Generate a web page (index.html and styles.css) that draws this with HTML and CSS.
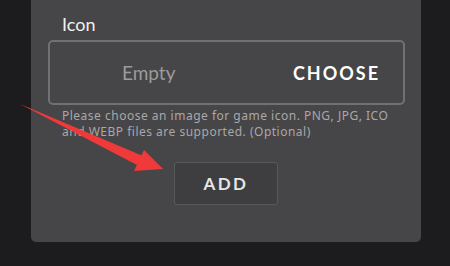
FILE: index.html
```html
<!DOCTYPE html>
<html lang="en">
<head>
    <meta charset="UTF-8">
    <meta name="viewport" content="width=device-width, initial-scale=1.0">
    <title>Add game</title>
    <link rel="stylesheet" href="styles.css">
</head>
<body>
    <div class="panel">
        <div class="form-group">
            <label class="field-label">Icon</label>
            <div class="picker">
                <span class="picker-empty">Empty</span>
                <span class="picker-choose">CHOOSE</span>
            </div>
            <p class="help">Please choose an image for game icon. PNG, JPG, ICO and WEBP files are supported. (Optional)</p>
        </div>
        <div class="actions">
            <button class="add-btn">ADD</button>
        </div>
    </div>

    <!-- red annotation arrow -->
    <svg class="arrow" width="450" height="266" viewBox="0 0 450 266">
        <path d="M20 104 L143 156 L137 165 Z" fill="#f03a3a"/>
        <polygon points="144,150 163,169 134,171" fill="#f03a3a"/>
    </svg>
</body>
</html>
```

FILE: styles.css
```css
body {
    margin: 0;
    background-color: #1c1b1e;
    font-family: 'Lato', sans-serif;
    height: 266px;
    overflow: hidden;
    position: relative;
}

.panel {
    margin-left: 31px;
    width: 390px;
    height: 242px;
    background-color: #464547;
    border-radius: 0 0 5px 5px;
    padding: 0 16px 0 17px;
    box-sizing: border-box;
}

.form-group {
    padding-top: 13px;
}

.field-label {
    display: block;
    color: #f2f2f2;
    font-size: 18px;
    line-height: 22px;
    padding-left: 14px;
    margin-bottom: 5px;
}

.picker {
    height: 65px;
    border: 2px solid #717072;
    border-radius: 5px;
    box-sizing: border-box;
    display: flex;
    align-items: center;
    justify-content: space-between;
    padding: 0 23px 0 72px;
}

.picker-empty {
    color: #9c9b9d;
    font-size: 19px;
}

.picker-choose {
    color: #ffffff;
    font-size: 18px;
    font-weight: bold;
    letter-spacing: 2px;
}

.help {
    margin: 3px 0 0 14px;
    color: #a9a8aa;
    font-family: 'Noto Sans', sans-serif;
    font-size: 12px;
    line-height: 16px;
    letter-spacing: 0.5px;
    width: 336px;
}

.actions {
    display: flex;
    justify-content: center;
    padding-top: 22px;
}

.add-btn {
    width: 104px;
    height: 43px;
    margin-right: 1px;
    background-color: #3e3d40;
    border: 1px solid #59585b;
    border-radius: 3px;
    color: #e6e6e6;
    font-family: 'Lato', sans-serif;
    font-size: 17px;
    font-weight: bold;
    letter-spacing: 2.4px;
}

.arrow {
    position: absolute;
    left: 0;
    top: 0;
}
```
